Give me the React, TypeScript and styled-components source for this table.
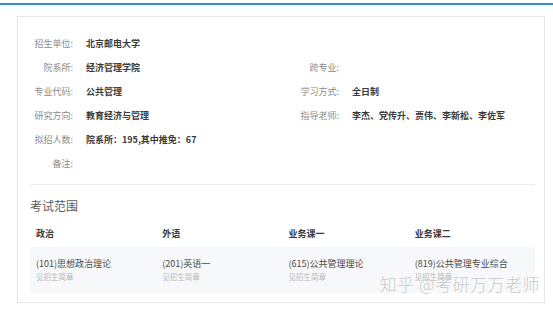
import React from 'react';
import styled, { createGlobalStyle } from 'styled-components';

const GlobalStyle = createGlobalStyle`
  html, body {
    margin: 0;
    padding: 0;
    background: #ffffff;
    font-family: "Noto Sans CJK SC", "Noto Sans", sans-serif;
  }
`;

const Page = styled.div`
  width: 553px;
  height: 309px;
  overflow: hidden;
  position: relative;
  background: #fff;
`;

const TopBar = styled.div`
  margin-top: 3px;
  height: 2px;
  background: #3390c1;
  box-shadow: 0 2px 4px rgba(80, 170, 220, 0.18);
`;

const Card = styled.div`
  position: relative;
  margin: 11px 0 0 17px;
  width: 528px;
  height: 287px;
  box-sizing: border-box;
  border: 1px solid #e6e6e6;
  padding: 0 9px 0 12px;
`;

const Info = styled.div`
  padding: 14px 0 9px;
  border-bottom: 1px solid #ececec;
`;

const Row = styled.div`
  display: flex;
  height: 24px;
  align-items: center;
`;

const Field = styled.div<{ $width?: number }>`
  display: flex;
  align-items: center;
  width: ${(p) => (p.$width ? `${p.$width}px` : 'auto')};
`;

const Label = styled.span<{ $width: number }>`
  width: ${(p) => p.$width}px;
  text-align: right;
  font-size: 9px;
  color: #8a8a8a;
  white-space: nowrap;
`;

const Value = styled.span`
  margin-left: 13px;
  font-size: 9px;
  font-weight: 700;
  color: #3a3a3a;
  white-space: nowrap;
`;

const Exam = styled.div`
  padding-top: 12px;
`;

const ExamTitle = styled.div`
  font-size: 12px;
  color: #5a5a5a;
  line-height: 18px;
`;

const Grid = styled.div`
  display: grid;
  grid-template-columns: repeat(4, 1fr);
`;

const HeadRow = styled(Grid)`
  height: 28px;
  margin-top: 4px;
  align-items: center;
`;

const Head = styled.div`
  padding-left: 6px;
  font-size: 9px;
  font-weight: 700;
  color: #3a3a3a;
`;

const BodyRow = styled(Grid)`
  background: #f7f8fa;
  height: 46px;
  align-content: center;
`;

const Cell = styled.div`
  padding-left: 6px;
  display: flex;
  flex-direction: column;
  gap: 2px;
`;

const Course = styled.span`
  font-size: 9px;
  color: #4a4a4a;
  line-height: 12px;
`;

const Note = styled.span`
  font-size: 7.5px;
  color: #b8b8b8;
  line-height: 10px;
`;

const Watermark = styled.div`
  position: absolute;
  right: 4px;
  bottom: 6px;
  font-size: 17px;
  font-weight: 300;
  color: rgba(185, 185, 185, 0.8);
  letter-spacing: 0.5px;
  text-shadow: 0 0 1px #fff;
  white-space: nowrap;
`;

type Item = { label: string; value?: string };

const rows: [Item, Item?][] = [
  [{ label: '招生单位:', value: '北京邮电大学' }],
  [{ label: '院系所:', value: '经济管理学院' }, { label: '跨专业:' }],
  [{ label: '专业代码:', value: '公共管理' }, { label: '学习方式:', value: '全日制' }],
  [
    { label: '研究方向:', value: '教育经济与管理' },
    { label: '指导老师:', value: '李杰、党传升、贾伟、李新松、李佐军' },
  ],
  [{ label: '拟招人数:', value: '院系所：195,其中推免：67' }],
  [{ label: '备注:' }],
];

const courses = [
  { head: '政治', name: '(101)思想政治理论' },
  { head: '外语', name: '(201)英语一' },
  { head: '业务课一', name: '(615)公共管理理论' },
  { head: '业务课二', name: '(819)公共管理专业综合' },
];

const App: React.FC = () => {
  return (
    <Page>
      <GlobalStyle />
      <TopBar />
      <Card>
        <Info>
          {rows.map(([left, right], i) => (
            <Row key={i}>
              <Field $width={259}>
                <Label $width={43}>{left.label}</Label>
                {left.value && <Value>{left.value}</Value>}
              </Field>
              {right && (
                <Field>
                  <Label $width={50}>{right.label}</Label>
                  {right.value && <Value>{right.value}</Value>}
                </Field>
              )}
            </Row>
          ))}
        </Info>
        <Exam>
          <ExamTitle>考试范围</ExamTitle>
          <HeadRow>
            {courses.map((c) => (
              <Head key={c.head}>{c.head}</Head>
            ))}
          </HeadRow>
          <BodyRow>
            {courses.map((c) => (
              <Cell key={c.name}>
                <Course>{c.name}</Course>
                <Note>见招生简章</Note>
              </Cell>
            ))}
          </BodyRow>
        </Exam>
        <Watermark>知乎 @考研万万老师</Watermark>
      </Card>
    </Page>
  );
};

export default App;
